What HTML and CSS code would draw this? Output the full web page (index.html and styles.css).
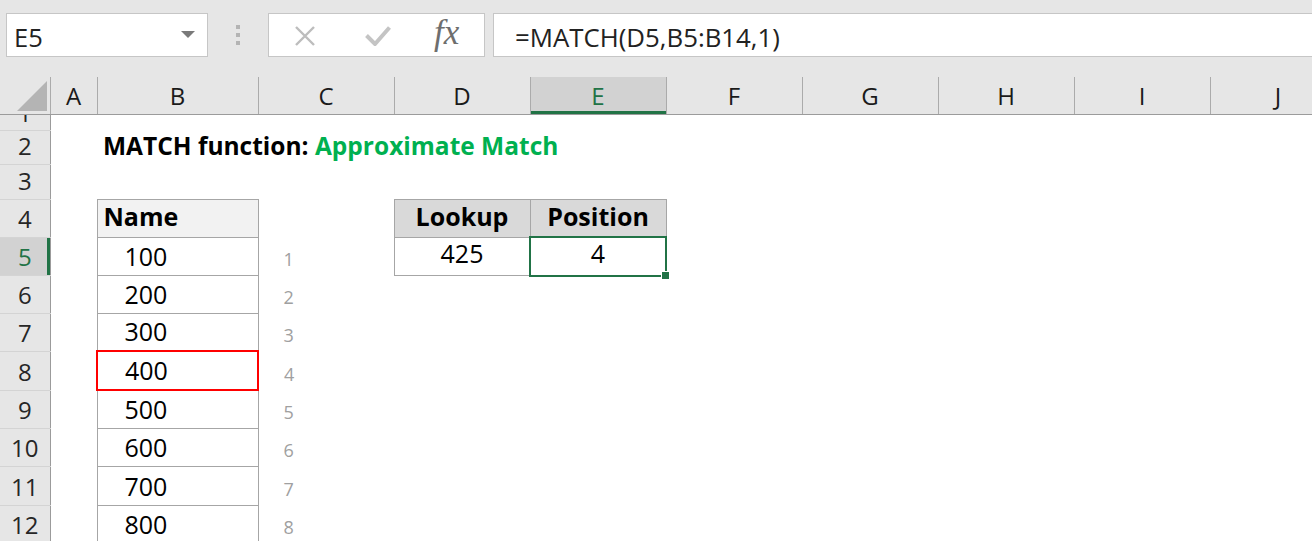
FILE: index.html
```html
<!DOCTYPE html>
<html lang="en">
<head>
    <meta charset="UTF-8">
    <meta name="viewport" content="width=device-width, initial-scale=1.0">
    <title>MATCH function</title>
    <link rel="stylesheet" href="styles.css">
</head>
<body>

    <div id="toolbar">
        <div id="nameBox">
            <span>E5</span>
            <span class="dropArrow"></span>
        </div>
        <div class="grip"><i></i><i></i><i></i></div>
        <div id="formulaTools">
            <svg class="cancelIcon" width="24" height="20" viewBox="0 0 24 20">
                <path d="M3 1 L21 19 M21 1 L3 19" stroke="#bdbdbd" stroke-width="2.4" fill="none"/>
            </svg>
            <svg class="enterIcon" width="26" height="20" viewBox="0 0 26 20">
                <path d="M1.5 9.5 L10 18 L24.5 1.5" stroke="#c4c4c4" stroke-width="4" fill="none"/>
            </svg>
            <span class="fx">fx</span>
        </div>
        <div id="formulaBar">=MATCH(D5,B5:B14,1)</div>
    </div>

    <table id="sheet">
        <colgroup>
            <col style="width:50px">
            <col style="width:47px">
            <col style="width:161px">
            <col style="width:136px">
            <col style="width:136px">
            <col style="width:136px">
            <col style="width:136px">
            <col style="width:136px">
            <col style="width:136px">
            <col style="width:136px">
            <col style="width:136px">
        </colgroup>
        <tr class="colhead">
            <th class="corner"><span class="cornerTri"></span></th>
            <th>A</th><th>B</th><th>C</th><th>D</th>
            <th class="active">E</th>
            <th>F</th><th>G</th><th>H</th><th>I</th><th>J</th>
        </tr>
        <tr class="r1">
            <th class="rh"><div class="clip"><span>1</span></div></th>
            <td></td><td></td><td></td><td></td><td></td><td></td><td></td><td></td><td></td><td></td>
        </tr>
        <tr class="r2">
            <th class="rh">2</th>
            <td></td>
            <td class="title" colspan="4">MATCH function: <span class="green">Approximate Match</span></td>
            <td></td><td></td><td></td><td></td><td></td>
        </tr>
        <tr class="r3">
            <th class="rh">3</th>
            <td></td><td></td><td></td><td></td><td></td><td></td><td></td><td></td><td></td><td></td>
        </tr>
        <tr class="r4">
            <th class="rh">4</th>
            <td></td>
            <td class="list listHead">Name</td>
            <td></td>
            <td class="lookHead">Lookup</td>
            <td class="lookHead">Position</td>
            <td></td><td></td><td></td><td></td><td></td>
        </tr>
        <tr class="r5">
            <th class="rh active">5</th>
            <td></td>
            <td class="list val">100</td>
            <td class="idx">1</td>
            <td class="lookVal">425</td>
            <td class="lookVal selected">4<div class="sel"></div></td>
            <td></td><td></td><td></td><td></td><td></td>
        </tr>
        <tr class="r6">
            <th class="rh">6</th>
            <td></td><td class="list val">200</td><td class="idx">2</td>
            <td></td><td></td><td></td><td></td><td></td><td></td><td></td>
        </tr>
        <tr class="r7">
            <th class="rh">7</th>
            <td></td><td class="list val">300</td><td class="idx">3</td>
            <td></td><td></td><td></td><td></td><td></td><td></td><td></td>
        </tr>
        <tr class="r8">
            <th class="rh">8</th>
            <td></td><td class="list val redBox">400</td><td class="idx">4</td>
            <td></td><td></td><td></td><td></td><td></td><td></td><td></td>
        </tr>
        <tr class="r9">
            <th class="rh">9</th>
            <td></td><td class="list val">500</td><td class="idx">5</td>
            <td></td><td></td><td></td><td></td><td></td><td></td><td></td>
        </tr>
        <tr class="r10">
            <th class="rh">10</th>
            <td></td><td class="list val">600</td><td class="idx">6</td>
            <td></td><td></td><td></td><td></td><td></td><td></td><td></td>
        </tr>
        <tr class="r11">
            <th class="rh">11</th>
            <td></td><td class="list val">700</td><td class="idx">7</td>
            <td></td><td></td><td></td><td></td><td></td><td></td><td></td>
        </tr>
        <tr class="r12">
            <th class="rh">12</th>
            <td></td><td class="list val">800</td><td class="idx">8</td>
            <td></td><td></td><td></td><td></td><td></td><td></td><td></td>
        </tr>
    </table>

</body>
</html>
```

FILE: styles.css
```css
body {
    margin: 0;
    font-family: "Open Sans", "Noto Sans", sans-serif;
    background: #fff;
    color: #000;
    overflow: hidden;
}

/* name box + formula bar */
#toolbar {
    display: flex;
    align-items: flex-start;
    height: 77px;
    padding-top: 13px;
    box-sizing: border-box;
    background: #e6e6e6;
}

#nameBox {
    margin-left: 6px;
    width: 202px;
    height: 44px;
    box-sizing: border-box;
    border: 1px solid #c6c6c6;
    background: #fff;
    display: flex;
    align-items: center;
    justify-content: space-between;
    padding: 3px 12px 0 7px;
    font-size: 25.5px;
    color: #222;
}

.dropArrow {
    width: 0;
    height: 0;
    margin-top: -4px;
    border-left: 7px solid transparent;
    border-right: 7px solid transparent;
    border-top: 7px solid #7a7a7a;
}

.grip {
    margin: 12px 0 0 28px;
    display: flex;
    flex-direction: column;
    gap: 4px;
}

.grip i {
    width: 4px;
    height: 4px;
    background: #b4b4b4;
}

#formulaTools {
    margin-left: 28px;
    width: 217px;
    height: 44px;
    box-sizing: border-box;
    border: 1px solid #c6c6c6;
    background: #fff;
    display: flex;
    align-items: center;
    padding-left: 24px;
}

.cancelIcon {
    margin-top: 2px;
}

.enterIcon {
    margin-left: 48px;
    margin-top: 2px;
}

.fx {
    margin-left: 43px;
    font-family: "Liberation Serif", serif;
    font-style: italic;
    font-size: 35px;
    color: #6e6e6e;
    margin-top: -4px;
}

#formulaBar {
    margin-left: 8px;
    flex: 1;
    height: 44px;
    box-sizing: border-box;
    border: 1px solid #c6c6c6;
    border-right: none;
    background: #fff;
    display: flex;
    align-items: center;
    padding: 3px 0 0 21px;
    font-size: 25.8px;
    color: #222;
}

/* worksheet grid */
#sheet {
    border-collapse: collapse;
    table-layout: fixed;
    width: 1346px;
}

#sheet td,
#sheet th {
    padding: 0 6px 6px;
    vertical-align: bottom;
    font-size: 25px;
    line-height: 1;
    white-space: nowrap;
    text-align: left;
}

.colhead {
    height: 37px;
}

#sheet .colhead th {
    font-weight: normal;
    font-size: 24px;
    text-align: center;
    color: #1a1a1a;
    background: #e6e6e6;
    border-right: 1px solid #ababab;
    border-bottom: 1px solid #9b9b9b;
    padding: 0 0 6px;
}

#sheet .colhead th.active {
    color: #217346;
    background: linear-gradient(to top, #217346 3px, #d2d2d2 3px);
}

#sheet .colhead th.corner {
    font-size: 0;
    padding: 0 3px 3px 0;
}

.cornerTri {
    display: block;
    margin-left: auto;
    width: 0;
    height: 0;
    border-left: 30px solid transparent;
    border-bottom: 30px solid #b4b4b4;
}

#sheet th.rh {
    font-weight: normal;
    font-size: 24px;
    text-align: center;
    color: #262626;
    background: #e6e6e6;
    border-right: 1px solid #9b9b9b;
    border-bottom: 1px solid #d4d4d4;
    padding: 0 0 6px;
}

#sheet th.rh.active {
    color: #217346;
    background: linear-gradient(to left, #217346 3px, #d2d2d2 3px);
}

/* row 1 is scrolled half out of view */
#sheet .r1 th.rh {
    padding: 0;
}

.clip {
    height: 15px;
    overflow: hidden;
    display: flex;
    flex-direction: column;
    justify-content: flex-end;
}

.clip span {
    display: block;
    line-height: 34px;
    flex-shrink: 0;
}

.r1 { height: 16px; }
.r2 { height: 34px; }
.r3 { height: 35px; }
.r4, .r5, .r6, .r7, .r9, .r10, .r12 { height: 38px; }
.r8, .r11 { height: 39px; }

#sheet td.title {
    font-weight: bold;
    font-size: 24.5px;
    padding-bottom: 6px;
}

.green {
    color: #00b050;
}

#sheet td.list {
    border: 1px solid #a6a6a6;
}

#sheet td.listHead {
    background: #f2f2f2;
    font-weight: bold;
    padding-bottom: 8px;
}

#sheet td.val {
    padding-left: 27px;
}

#sheet td.redBox {
    border: 2px solid #ff0000;
}

#sheet td.idx {
    color: #a0a0a0;
    font-size: 18px;
    padding-left: 25px;
    padding-bottom: 7px;
}

#sheet td.lookHead {
    background: #d9d9d9;
    border: 1px solid #a6a6a6;
    font-weight: bold;
    text-align: center;
    padding-bottom: 8px;
}

#sheet td.lookVal {
    border: 1px solid #a6a6a6;
    text-align: center;
    padding-bottom: 9px;
}

.selected {
    position: relative;
}

.sel {
    position: absolute;
    top: -2px;
    left: -2px;
    right: -1px;
    bottom: -2px;
    border: 2px solid #217346;
}

.sel::after {
    content: "";
    position: absolute;
    right: -5px;
    bottom: -5px;
    width: 7px;
    height: 7px;
    background: #217346;
    border: 1px solid #fff;
}
```
